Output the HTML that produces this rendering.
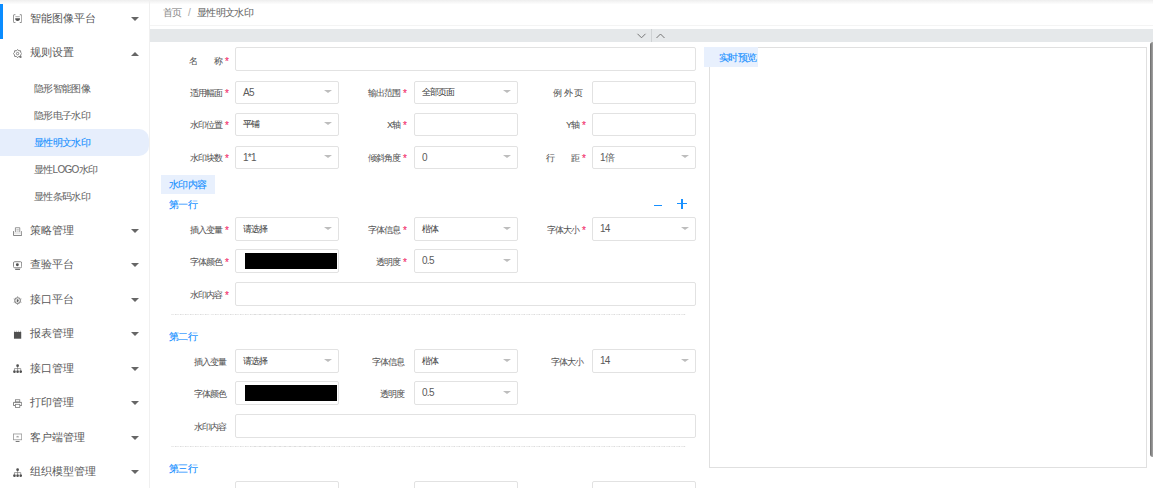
<!DOCTYPE html>
<html><head><meta charset="utf-8"><style>
*{box-sizing:border-box;margin:0;padding:0}
html,body{width:1153px;height:488px;overflow:hidden;background:#fff;font-family:"Liberation Sans",sans-serif;position:relative}
.a{position:absolute;white-space:nowrap;-webkit-text-stroke:0.15px currentColor}
.mi{font-size:11px;color:#585858;line-height:14px;-webkit-text-stroke:0}
.sub{font-size:10px;color:#666;line-height:13px;letter-spacing:-0.7px;-webkit-text-stroke:0.06px currentColor}
.caret{width:0;height:0;border-left:4px solid transparent;border-right:4px solid transparent;border-top:4px solid #666}
.caretup{width:0;height:0;border-left:4px solid transparent;border-right:4px solid transparent;border-bottom:4px solid #666}
.lbl{font-size:9px;color:#555;line-height:12px;letter-spacing:-1px;-webkit-text-stroke:0.05px currentColor}
.star{color:#f2306c;font-size:10px;line-height:10px}
.box{border:1px solid #e2e2e2;border-radius:2px;background:#fff}
.val{font-size:9px;color:#444;line-height:12px;letter-spacing:-0.9px;-webkit-text-stroke:0.05px currentColor}
.num{font-size:10px;color:#5a5a5a;line-height:12px;letter-spacing:-0.7px;-webkit-text-stroke:0}
.dd{width:0;height:0;border-left:4.2px solid transparent;border-right:4.2px solid transparent;border-top:3.8px solid #bdbdbd}
.blue{color:#1890ff;-webkit-text-stroke:0.12px currentColor}
</style></head><body>
<div class="a " style="left:0;top:0;width:1153px;height:4px;background:linear-gradient(#eeeeee,#fdfdfd)"></div>
<div class="a " style="left:0;top:0;width:150px;height:488px;border-right:1px solid #f0f0f0"></div>
<div class="a " style="left:0;top:4px;width:3px;height:35px;background:#0a8cff"></div>
<svg class="a" style="left:13.2px;top:14px" width="9.2" height="9.2" viewBox="0.5 0.5 19 19"><path d="M5.5 2H3Q1.2 2 1.2 4V16Q1.2 18 3 18H5.5M14.5 2H17Q18.8 2 18.8 4V16Q18.8 18 17 18H14.5" fill="none" stroke="#707070" stroke-width="1.8"/><path d="M5.5 6H14.5" stroke="#888" stroke-width="1.5"/><path d="M5 9.5H15Q15 15 10 15Q5 15 5 9.5Z" fill="#505050"/></svg>
<div class="a mi" style="left:30px;top:10.7px">智能图像平台</div>
<div class="a caret" style="left:130.5px;top:16.7px"></div>
<svg class="a" style="left:13.2px;top:49px" width="9.2" height="9.2" viewBox="0.5 0.5 19 19"><path d="M10 1.5L12.3 4.2L16 4L16.5 7.5L18.8 10L16.5 12.5L16 16L12.3 15.8L10 18.5L7.7 15.8L4 16L3.5 12.5L1.2 10L3.5 7.5L4 4L7.7 4.2Z" fill="none" stroke="#707070" stroke-width="1.8"/><circle cx="10" cy="10" r="2.5" fill="none" stroke="#707070" stroke-width="1.7"/><rect x="14" y="15" width="4" height="4" fill="#777"/></svg>
<div class="a mi" style="left:30px;top:45.2px">规则设置</div>
<div class="a caretup" style="left:130.5px;top:52.2px"></div>
<div class="a " style="left:0;top:129px;width:149px;height:27px;background:#e6eefc;border-radius:0 10px 10px 0"></div>
<div class="a sub" style="left:34px;top:81.5px">隐形智能图像</div>
<div class="a sub" style="left:34px;top:108.5px">隐形电子水印</div>
<div class="a sub blue" style="left:34px;top:135.5px">显性明文水印</div>
<div class="a sub" style="left:34px;top:162.5px">显性LOGO水印</div>
<div class="a sub" style="left:34px;top:189.5px">显性条码水印</div>
<svg class="a" style="left:13.2px;top:227px" width="9.2" height="9.2" viewBox="0.5 0.5 19 19"><path d="M5.5 11V2H14.5V11" fill="none" stroke="#808080" stroke-width="1.7"/><path d="M7.5 6H12.5M7.5 9H12.5" stroke="#999" stroke-width="1.3"/><path d="M1.5 9V18H18.5V9" fill="none" stroke="#707070" stroke-width="1.8"/><path d="M1.5 13H18.5" stroke="#aaa" stroke-width="1"/></svg>
<div class="a mi" style="left:30px;top:223.0px">策略管理</div>
<div class="a caret" style="left:130.5px;top:229.0px"></div>
<svg class="a" style="left:13.2px;top:261px" width="9.2" height="9.2" viewBox="0.5 0.5 19 19"><rect x="1.5" y="2" width="17" height="12.5" rx="2.5" fill="none" stroke="#808080" stroke-width="2"/><circle cx="9.5" cy="8.2" r="3" fill="#505050"/><rect x="5" y="16.5" width="10" height="2.5" fill="#707070"/></svg>
<div class="a mi" style="left:30px;top:257.4px">查验平台</div>
<div class="a caret" style="left:130.5px;top:263.4px"></div>
<svg class="a" style="left:13.2px;top:296px" width="9.2" height="9.2" viewBox="0.5 0.5 19 19"><circle cx="10" cy="10" r="5.8" fill="none" stroke="#8a8a8a" stroke-width="2.2"/><path d="M10 1V4.2M10 15.8V19M2 6.5L4.8 8M15.2 12L18 13.5M2 13.5L4.8 12M15.2 8L18 6.5" stroke="#999" stroke-width="1.8"/><path d="M8.3 7.3H9.8Q12.2 7.3 12.2 10Q12.2 12.7 9.8 12.7H8.3Z" fill="#606060"/></svg>
<div class="a mi" style="left:30px;top:291.9px">接口平台</div>
<div class="a caret" style="left:130.5px;top:297.9px"></div>
<svg class="a" style="left:13.2px;top:330px" width="9.2" height="9.2" viewBox="0.5 0.5 19 19"><rect x="2.5" y="4.5" width="15" height="14" fill="#505050"/><path d="M4 4.5V2M8 4.5V2M12 4.5V2M16 4.5V2" stroke="#999" stroke-width="1.4"/></svg>
<div class="a mi" style="left:30px;top:326.3px">报表管理</div>
<div class="a caret" style="left:130.5px;top:332.3px"></div>
<svg class="a" style="left:13.2px;top:364px" width="9.2" height="9.2" viewBox="0.5 0.5 19 19"><circle cx="10" cy="4" r="2.8" fill="#505050"/><path d="M10 6.5V10M3.5 10H16.5M3.5 10V14M10 10V14M16.5 10V14" fill="none" stroke="#707070" stroke-width="1.4"/><circle cx="3.5" cy="16.3" r="2.7" fill="#505050"/><circle cx="10" cy="16.3" r="2.7" fill="#505050"/><circle cx="16.5" cy="16.3" r="2.7" fill="#505050"/></svg>
<div class="a mi" style="left:30px;top:360.7px">接口管理</div>
<div class="a caret" style="left:130.5px;top:366.7px"></div>
<svg class="a" style="left:13.2px;top:399px" width="9.2" height="9.2" viewBox="0.5 0.5 19 19"><rect x="5.5" y="2" width="9" height="4.5" fill="none" stroke="#808080" stroke-width="1.7"/><path d="M5 14H1.5V7.5H18.5V14H15" fill="none" stroke="#707070" stroke-width="1.8"/><rect x="5.5" y="11.5" width="9" height="6.5" fill="none" stroke="#808080" stroke-width="1.7"/></svg>
<div class="a mi" style="left:30px;top:395.1px">打印管理</div>
<div class="a caret" style="left:130.5px;top:401.1px"></div>
<svg class="a" style="left:13.2px;top:433px" width="9.2" height="9.2" viewBox="0.5 0.5 19 19"><rect x="1.5" y="2.5" width="17" height="12" fill="none" stroke="#999" stroke-width="1.7"/><path d="M7.5 8.5H12.5" stroke="#808080" stroke-width="1.7"/><path d="M10 6.5V8.5" stroke="#888" stroke-width="1.2"/><path d="M6 18H14" stroke="#707070" stroke-width="2"/></svg>
<div class="a mi" style="left:30px;top:429.6px">客户端管理</div>
<div class="a caret" style="left:130.5px;top:435.6px"></div>
<svg class="a" style="left:13.2px;top:468px" width="9.2" height="9.2" viewBox="0.5 0.5 19 19"><circle cx="10" cy="4" r="2.8" fill="#505050"/><path d="M10 6.5V10M3.5 10H16.5M3.5 10V14M10 10V14M16.5 10V14" fill="none" stroke="#707070" stroke-width="1.4"/><circle cx="3.5" cy="16.3" r="2.7" fill="#505050"/><circle cx="10" cy="16.3" r="2.7" fill="#505050"/><circle cx="16.5" cy="16.3" r="2.7" fill="#505050"/></svg>
<div class="a mi" style="left:30px;top:464.0px">组织模型管理</div>
<div class="a caret" style="left:130.5px;top:470.0px"></div>
<div class="a sub" style="left:163px;top:6px;color:#8c8c8c">首页</div>
<div class="a sub" style="left:188px;top:6px;color:#aaa">/</div>
<div class="a sub" style="left:197px;top:6px;color:#666">显性明文水印</div>
<div class="a " style="left:150px;top:25px;width:1003px;height:1px;background:#f4f4f4"></div>
<div class="a " style="left:150px;top:29px;width:1003px;height:13px;background:#e5e8ea"></div>
<div class="a " style="left:651px;top:29px;width:1px;height:13px;background:#cfd2d4"></div>
<svg class="a" style="left:636px;top:32px" width="11" height="8" viewBox="0 0 11 8"><path d="M1.5 1.8L5.5 5.8L9.5 1.8" fill="none" stroke="#707070" stroke-width="0.95"/></svg>
<svg class="a" style="left:655px;top:32px" width="11" height="8" viewBox="0 0 11 8"><path d="M1.5 6L5.5 2L9.5 6" fill="none" stroke="#707070" stroke-width="0.95"/></svg>
<div class="a lbl" style="right:931px;top:55.0px;text-align:right">称</div>
<div class="a star" style="left:225px;top:56.7px">*</div>
<div class="a lbl" style="left:189px;top:55px">名</div>
<div class="a box" style="left:235px;top:47px;width:461px;height:24px"></div>
<div class="a lbl" style="right:931px;top:87.0px;text-align:right">适用幅面</div>
<div class="a star" style="left:225px;top:88.7px">*</div>
<div class="a box" style="left:235px;top:81px;width:104px;height:23px"></div>
<div class="a num" style="left:243px;top:86.5px">A5</div>
<div class="a dd" style="left:323.8px;top:89.7px"></div>
<div class="a lbl" style="right:753px;top:87.0px;text-align:right">输出范围</div>
<div class="a star" style="left:403px;top:88.7px">*</div>
<div class="a box" style="left:414px;top:81px;width:104px;height:23px"></div>
<div class="a val" style="left:422px;top:85.7px">全部页面</div>
<div class="a dd" style="left:502.8px;top:89.7px"></div>
<div class="a lbl" style="left:553px;top:87px;letter-spacing:1.5px">例外页</div>
<div class="a box" style="left:592px;top:81px;width:104px;height:23px"></div>
<div class="a lbl" style="right:931px;top:119.0px;text-align:right">水印位置</div>
<div class="a star" style="left:225px;top:120.7px">*</div>
<div class="a box" style="left:235px;top:113px;width:104px;height:23px"></div>
<div class="a val" style="left:243px;top:117.7px">平铺</div>
<div class="a dd" style="left:323.8px;top:121.7px"></div>
<div class="a lbl" style="right:753px;top:119.0px;text-align:right">X轴</div>
<div class="a star" style="left:403px;top:120.7px">*</div>
<div class="a box" style="left:414px;top:113px;width:104px;height:23px"></div>
<div class="a lbl" style="right:574px;top:119.0px;text-align:right">Y轴</div>
<div class="a star" style="left:582px;top:120.7px">*</div>
<div class="a box" style="left:592px;top:113px;width:104px;height:23px"></div>
<div class="a lbl" style="right:931px;top:152.0px;text-align:right">水印块数</div>
<div class="a star" style="left:225px;top:153.7px">*</div>
<div class="a box" style="left:235px;top:146px;width:104px;height:23px"></div>
<div class="a num" style="left:243px;top:151.5px">1*1</div>
<div class="a dd" style="left:323.8px;top:154.7px"></div>
<div class="a lbl" style="right:753px;top:152.0px;text-align:right">倾斜角度</div>
<div class="a star" style="left:403px;top:153.7px">*</div>
<div class="a box" style="left:414px;top:146px;width:104px;height:23px"></div>
<div class="a num" style="left:422px;top:151.5px">0</div>
<div class="a dd" style="left:502.8px;top:154.7px"></div>
<div class="a lbl" style="right:574px;top:152.0px;text-align:right">距</div>
<div class="a star" style="left:582px;top:153.7px">*</div>
<div class="a lbl" style="left:546px;top:152px">行</div>
<div class="a box" style="left:592px;top:146px;width:104px;height:23px"></div>
<div class="a num" style="left:600px;top:151.5px">1倍</div>
<div class="a dd" style="left:680.8px;top:154.7px"></div>
<div class="a " style="left:161px;top:175px;width:54px;height:19px;background:#e8f0fd"></div>
<div class="a sub blue" style="left:169px;top:177.5px">水印内容</div>
<div class="a sub blue" style="left:169px;top:197.5px">第一行</div>
<div class="a " style="left:654px;top:204.5px;width:8px;height:1.6px;background:#1890ff"></div>
<div class="a " style="left:677px;top:202.8px;width:10px;height:1.5px;background:#1890ff"></div>
<div class="a " style="left:681.2px;top:199px;width:1.5px;height:9.5px;background:#1890ff"></div>
<div class="a lbl" style="right:931px;top:224.0px;text-align:right">插入变量</div>
<div class="a star" style="left:225px;top:225.7px">*</div>
<div class="a box" style="left:235px;top:217px;width:104px;height:24px"></div>
<div class="a val" style="left:243px;top:222.8px">请选择</div>
<div class="a dd" style="left:323.8px;top:227.0px"></div>
<div class="a lbl" style="right:753px;top:224.0px;text-align:right">字体信息</div>
<div class="a star" style="left:403px;top:225.7px">*</div>
<div class="a box" style="left:414px;top:217px;width:104px;height:24px"></div>
<div class="a val" style="left:422px;top:222.8px">楷体</div>
<div class="a dd" style="left:502.8px;top:227.0px"></div>
<div class="a lbl" style="right:574px;top:224.0px;text-align:right">字体大小</div>
<div class="a star" style="left:582px;top:225.7px">*</div>
<div class="a box" style="left:592px;top:217px;width:104px;height:24px"></div>
<div class="a num" style="left:600px;top:223.0px">14</div>
<div class="a dd" style="left:680.8px;top:227.0px"></div>
<div class="a lbl" style="right:931px;top:256.0px;text-align:right">字体颜色</div>
<div class="a star" style="left:225px;top:257.7px">*</div>
<div class="a box" style="left:235px;top:249px;width:104px;height:24px"></div>
<div class="a " style="left:245px;top:253px;width:92px;height:16px;background:#000"></div>
<div class="a lbl" style="right:753px;top:256.0px;text-align:right">透明度</div>
<div class="a star" style="left:403px;top:257.7px">*</div>
<div class="a box" style="left:414px;top:249px;width:104px;height:24px"></div>
<div class="a num" style="left:422px;top:255.0px">0.5</div>
<div class="a dd" style="left:502.8px;top:259.0px"></div>
<div class="a lbl" style="right:931px;top:289.0px;text-align:right">水印内容</div>
<div class="a star" style="left:225px;top:290.7px">*</div>
<div class="a box" style="left:235px;top:282px;width:461px;height:24px"></div>
<div class="a " style="left:171px;top:314px;width:515px;height:1px;background:repeating-linear-gradient(90deg,#ececec 0 3px,#fafafa 3px 3.5px,#dcdcdc 3.5px 4.5px,#fafafa 4.5px 5px)"></div>
<div class="a sub blue" style="left:169px;top:329.5px">第二行</div>
<div class="a lbl" style="right:927px;top:356.0px;text-align:right">插入变量</div>
<div class="a box" style="left:235px;top:349px;width:104px;height:24px"></div>
<div class="a val" style="left:243px;top:354.8px">请选择</div>
<div class="a dd" style="left:323.8px;top:359.0px"></div>
<div class="a lbl" style="right:749px;top:356.0px;text-align:right">字体信息</div>
<div class="a box" style="left:414px;top:349px;width:104px;height:24px"></div>
<div class="a val" style="left:422px;top:354.8px">楷体</div>
<div class="a dd" style="left:502.8px;top:359.0px"></div>
<div class="a lbl" style="right:570px;top:356.0px;text-align:right">字体大小</div>
<div class="a box" style="left:592px;top:349px;width:104px;height:24px"></div>
<div class="a num" style="left:600px;top:355.0px">14</div>
<div class="a dd" style="left:680.8px;top:359.0px"></div>
<div class="a lbl" style="right:927px;top:388.0px;text-align:right">字体颜色</div>
<div class="a box" style="left:235px;top:381px;width:104px;height:24px"></div>
<div class="a " style="left:245px;top:385px;width:92px;height:16px;background:#000"></div>
<div class="a lbl" style="right:749px;top:388.0px;text-align:right">透明度</div>
<div class="a box" style="left:414px;top:381px;width:104px;height:24px"></div>
<div class="a num" style="left:422px;top:387.0px">0.5</div>
<div class="a dd" style="left:502.8px;top:391.0px"></div>
<div class="a lbl" style="right:927px;top:421.0px;text-align:right">水印内容</div>
<div class="a box" style="left:235px;top:414px;width:461px;height:24px"></div>
<div class="a " style="left:171px;top:446px;width:515px;height:1px;background:repeating-linear-gradient(90deg,#ececec 0 3px,#fafafa 3px 3.5px,#dcdcdc 3.5px 4.5px,#fafafa 4.5px 5px)"></div>
<div class="a sub blue" style="left:169px;top:461.5px">第三行</div>
<div class="a box" style="left:235px;top:481px;width:104px;height:23px"></div>
<div class="a box" style="left:414px;top:481px;width:104px;height:23px"></div>
<div class="a box" style="left:592px;top:481px;width:104px;height:23px"></div>
<div class="a " style="left:709px;top:47px;width:438px;height:421px;border:1px solid #e0e0e0"></div>
<div class="a " style="left:704px;top:47px;width:54px;height:20px;background:#e8f0fd"></div>
<div class="a sub blue" style="left:719px;top:51px">实时预览</div>
<div class="a " style="left:1150px;top:42px;width:3px;height:415px;background:linear-gradient(90deg,#6a6a6a,#8f8f8f 60%,#a5a5a5);border-radius:3px 0 0 3px"></div>
</body></html>
